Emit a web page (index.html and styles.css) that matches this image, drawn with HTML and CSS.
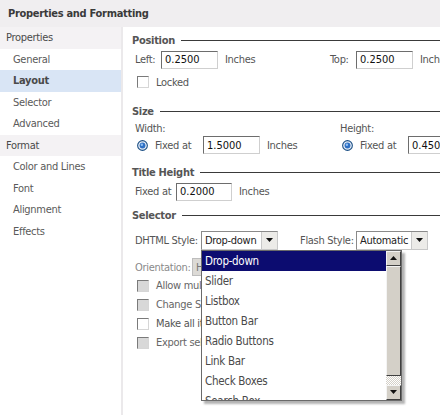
FILE: index.html
```html
<!DOCTYPE html>
<html lang="en">
<head>
  <meta charset="UTF-8">
  <title>Properties and Formatting</title>
  <link rel="stylesheet" href="styles.css">
</head>
<body>
  <div class="dialog">
    <div class="dialog-title">Properties and Formatting</div>

    <div class="dialog-body">
      <nav class="nav">
        <div class="nav-group">Properties</div>
        <div class="nav-item">General</div>
        <div class="nav-item active">Layout</div>
        <div class="nav-item">Selector</div>
        <div class="nav-item">Advanced</div>
        <div class="nav-group">Format</div>
        <div class="nav-item">Color and Lines</div>
        <div class="nav-item">Font</div>
        <div class="nav-item">Alignment</div>
        <div class="nav-item">Effects</div>
      </nav>

      <main class="panel">
        <!-- Position -->
        <div class="legend">Position</div>
        <div class="row row-pos">
          <div class="col col-left">
            <span class="lbl-short">Left:</span>
            <span class="input w-57">0.2500</span>
            <span class="unit">Inches</span>
          </div>
          <div class="col">
            <span class="lbl-short">Top:</span>
            <span class="input w-57">0.2500</span>
            <span class="unit">Inches</span>
          </div>
        </div>
        <div class="row row-check-lg">
          <span class="check"></span>
          <span>Locked</span>
        </div>

        <!-- Size -->
        <div class="legend legend-size">Size</div>
        <div class="row row-label">
          <div class="col col-size">Width:</div>
          <div class="col">Height:</div>
        </div>
        <div class="row row-radio">
          <div class="col col-size">
            <svg class="radio" viewBox="0 0 12 12">
              <circle cx="6" cy="6" r="5.3" fill="#e8eef6" stroke="#1b4f85" stroke-width="1.2"/>
              <circle cx="6" cy="6" r="3.2" fill="#2d6fc4"/>
              <circle cx="5.3" cy="5.2" r="1.3" fill="#8fc0f2"/>
            </svg>
            <span class="fixed">Fixed at</span>
            <span class="input w-57">1.5000</span>
            <span class="unit">Inches</span>
          </div>
          <div class="col">
            <svg class="radio" viewBox="0 0 12 12">
              <circle cx="6" cy="6" r="5.3" fill="#e8eef6" stroke="#1b4f85" stroke-width="1.2"/>
              <circle cx="6" cy="6" r="3.2" fill="#2d6fc4"/>
              <circle cx="5.3" cy="5.2" r="1.3" fill="#8fc0f2"/>
            </svg>
            <span class="fixed">Fixed at</span>
            <span class="input w-57">0.4500</span>
          </div>
        </div>

        <!-- Title height -->
        <div class="legend legend-title">Title Height</div>
        <div class="row row-pos">
          <span class="lbl-fixed">Fixed at</span>
          <span class="input w-56">0.2000</span>
          <span class="unit">Inches</span>
        </div>

        <!-- Selector -->
        <div class="legend legend-selector">Selector</div>
        <div class="row row-select">
          <span class="lbl-dhtml">DHTML Style:</span>
          <div class="select select-dhtml">
            <span class="select-value">Drop-down</span>
            <span class="select-btn">
              <svg viewBox="0 0 7 4"><polygon points="0,0 7,0 3.5,4" /></svg>
            </span>

            <div class="listbox">
              <div class="list-items">
                <div class="list-item selected">Drop-down</div>
                <div class="list-item">Slider</div>
                <div class="list-item">Listbox</div>
                <div class="list-item">Button Bar</div>
                <div class="list-item">Radio Buttons</div>
                <div class="list-item">Link Bar</div>
                <div class="list-item">Check Boxes</div>
                <div class="list-item">Search Box</div>
              </div>
              <div class="scrollbar">
                <span class="sb-btn">
                  <svg viewBox="0 0 7 4"><polygon points="0,4 7,4 3.5,0" /></svg>
                </span>
                <span class="sb-thumb"></span>
                <span class="sb-track"></span>
                <span class="sb-btn">
                  <svg viewBox="0 0 7 4"><polygon points="0,0 7,0 3.5,4" /></svg>
                </span>
              </div>
            </div>
          </div>
          <span class="lbl-flash">Flash Style:</span>
          <div class="select select-flash">
            <span class="select-value">Automatic</span>
            <span class="select-btn">
              <svg viewBox="0 0 7 4"><polygon points="0,0 7,0 3.5,4" /></svg>
            </span>
          </div>
        </div>

        <div class="row row-orient disabled">
          <span class="lbl-orient">Orientation:</span>
          <span class="select-disabled">Horizontal</span>
        </div>
        <div class="row row-check disabled">
          <span class="check off"></span>
          <span>Allow multiple selections</span>
        </div>
        <div class="row row-check disabled">
          <span class="check off"></span>
          <span>Change Selector to Selected</span>
        </div>
        <div class="row row-check">
          <span class="check"></span>
          <span>Make all items visible</span>
        </div>
        <div class="row row-check disabled">
          <span class="check off"></span>
          <span>Export selector</span>
        </div>
      </main>
    </div>
  </div>
</body>
</html>
```

FILE: styles.css
```css
* {
  margin: 0;
  padding: 0;
  box-sizing: border-box;
}

body {
  width: 440px;
  height: 415px;
  overflow: hidden;
  background: #fff;
  font-family: "DejaVu Sans Condensed", "DejaVu Sans", sans-serif;
  font-stretch: condensed;
  font-size: 11px;
  letter-spacing: -0.3px;
  color: #555;
}

.dialog {
  height: 415px;
  display: flex;
  flex-direction: column;
}

.dialog-title {
  height: 27px;
  flex-shrink: 0;
  display: flex;
  align-items: center;
  padding-left: 8px;
  background: #f0eef0;
  font-weight: bold;
  color: #3a3a3a;
}

.dialog-body {
  flex: 1;
  display: flex;
}

/* left navigation */
.nav {
  width: 123px;
  flex-shrink: 0;
  border-right: 2px solid #ebe9eb;
  background: #fff;
}

.nav-group,
.nav-item {
  height: 21.5px;
  display: flex;
  align-items: center;
}

.nav-group {
  padding-left: 6px;
  background: #f4f2f4;
  color: #4a4a4a;
}

.nav-item {
  padding-left: 13px;
  color: #5a5a5a;
}

.nav-item.active {
  background: #d9e5f5;
  font-weight: bold;
  color: #4a4a4a;
}

/* right panel */
.panel {
  flex: 1;
  min-width: 0;
  padding: 5px 0 0 9px;
}

.legend {
  height: 16px;
  display: flex;
  align-items: center;
  gap: 6px;
  font-weight: bold;
  color: #555;
}

.legend::after {
  content: "";
  flex: 1;
  border-top: 1px solid #3a3a3a;
}

.legend-size { margin-top: 10px; }
.legend-title { margin-top: 11px; }
.legend-selector { margin-top: 4px; }

.row {
  display: flex;
  align-items: center;
  padding-left: 3px;
  white-space: nowrap;
}

.row-pos { height: 23px; gap: 4px; }
.row-check-lg { height: 22px; gap: 7px; }
.row-label { height: 18px; }
.row-radio { height: 16px; }
.row-select { height: 24px; margin-top: 5px; }
.row-orient { height: 18px; margin-top: 6px; }
.row-check { height: 19px; gap: 7px; }

.col {
  display: flex;
  align-items: center;
  gap: 4px;
  flex-shrink: 0;
}

.col-left { width: 191px; }
.col-size { width: 205px; }

.lbl-short { width: 22px; }
.lbl-fixed { width: 37px; }
.lbl-dhtml { width: 66px; }
.lbl-flash { width: 56px; margin-left: 22px; }
.lbl-orient { width: 57px; }

.unit { margin-left: 3px; }

.fixed {
  width: 44px;
  margin-left: 3px;
}

.radio {
  width: 11px;
  height: 11px;
  margin-left: 2px;
  flex-shrink: 0;
}

.input {
  height: 18px;
  flex-shrink: 0;
  display: flex;
  align-items: center;
  padding-left: 3px;
  background: #fff;
  border: 1px solid;
  border-color: #6d6d6d #cfcfcf #cfcfcf #6d6d6d;
  color: #111;
  letter-spacing: 0;
  overflow: hidden;
}

.w-57 { width: 57px; }
.w-56 { width: 56px; }

.check {
  width: 12px;
  height: 12px;
  margin-left: 2px;
  background: #fff;
  border: 1px solid;
  border-color: #7a7a7a #d6d6d6 #d6d6d6 #7a7a7a;
}

.check.off {
  background: #d8d8d8;
}

.disabled {
  color: #8a8a8a;
}

.row-check.disabled {
  color: #666;
}

/* select boxes */
.select {
  position: relative;
  height: 19px;
  flex-shrink: 0;
  display: flex;
  border: 1px solid;
  border-color: #8a8a8a #c8c8c8 #c8c8c8 #8a8a8a;
  background: #fff;
  color: #222;
}

.select-dhtml { width: 77px; }
.select-flash { width: 72px; }

.select-value {
  flex: 1;
  display: flex;
  align-items: center;
  padding-left: 3px;
}

.select-btn {
  width: 16px;
  display: flex;
  align-items: center;
  justify-content: center;
  background: #ecebe8;
  border-left: 1px solid #c8c8c8;
}

.select-btn svg,
.sb-btn svg {
  width: 7px;
  height: 4px;
  fill: #111;
}

.select-disabled {
  width: 80px;
  height: 18px;
  display: flex;
  align-items: center;
  padding-left: 3px;
  background: #dcdad6;
  border: 1px solid #bdbdbd;
  color: #777;
}

/* open dropdown list */
.listbox {
  position: absolute;
  top: 18px;
  left: -1px;
  width: 201px;
  height: 151px;
  display: flex;
  background: #fff;
  border: 1px solid #6a6a6a;
  box-shadow: 3px 3px 2px rgba(0, 0, 0, 0.3);
  z-index: 2;
}

.list-items {
  flex: 1;
  overflow: hidden;
}

.list-item {
  height: 20px;
  display: flex;
  align-items: center;
  padding-left: 3px;
  color: #4a4a4a;
  font-size: 11.5px;
}

.list-item.selected {
  background: #0c0c70;
  color: #fff;
}

.scrollbar {
  width: 15px;
  display: flex;
  flex-direction: column;
}

.sb-btn {
  height: 15px;
  display: flex;
  align-items: center;
  justify-content: center;
  background: #d4d0c8;
  border: 1px solid;
  border-color: #f4f4f4 #404040 #404040 #f4f4f4;
}

.sb-thumb {
  flex: 1;
  background: #d4d0c8;
  border: 1px solid;
  border-color: #f4f4f4 #404040 #404040 #f4f4f4;
}

.sb-track {
  height: 9px;
  background: repeating-conic-gradient(#d4d0c8 0 25%, #fff 0 50%) 0 0 / 2px 2px;
}
```
